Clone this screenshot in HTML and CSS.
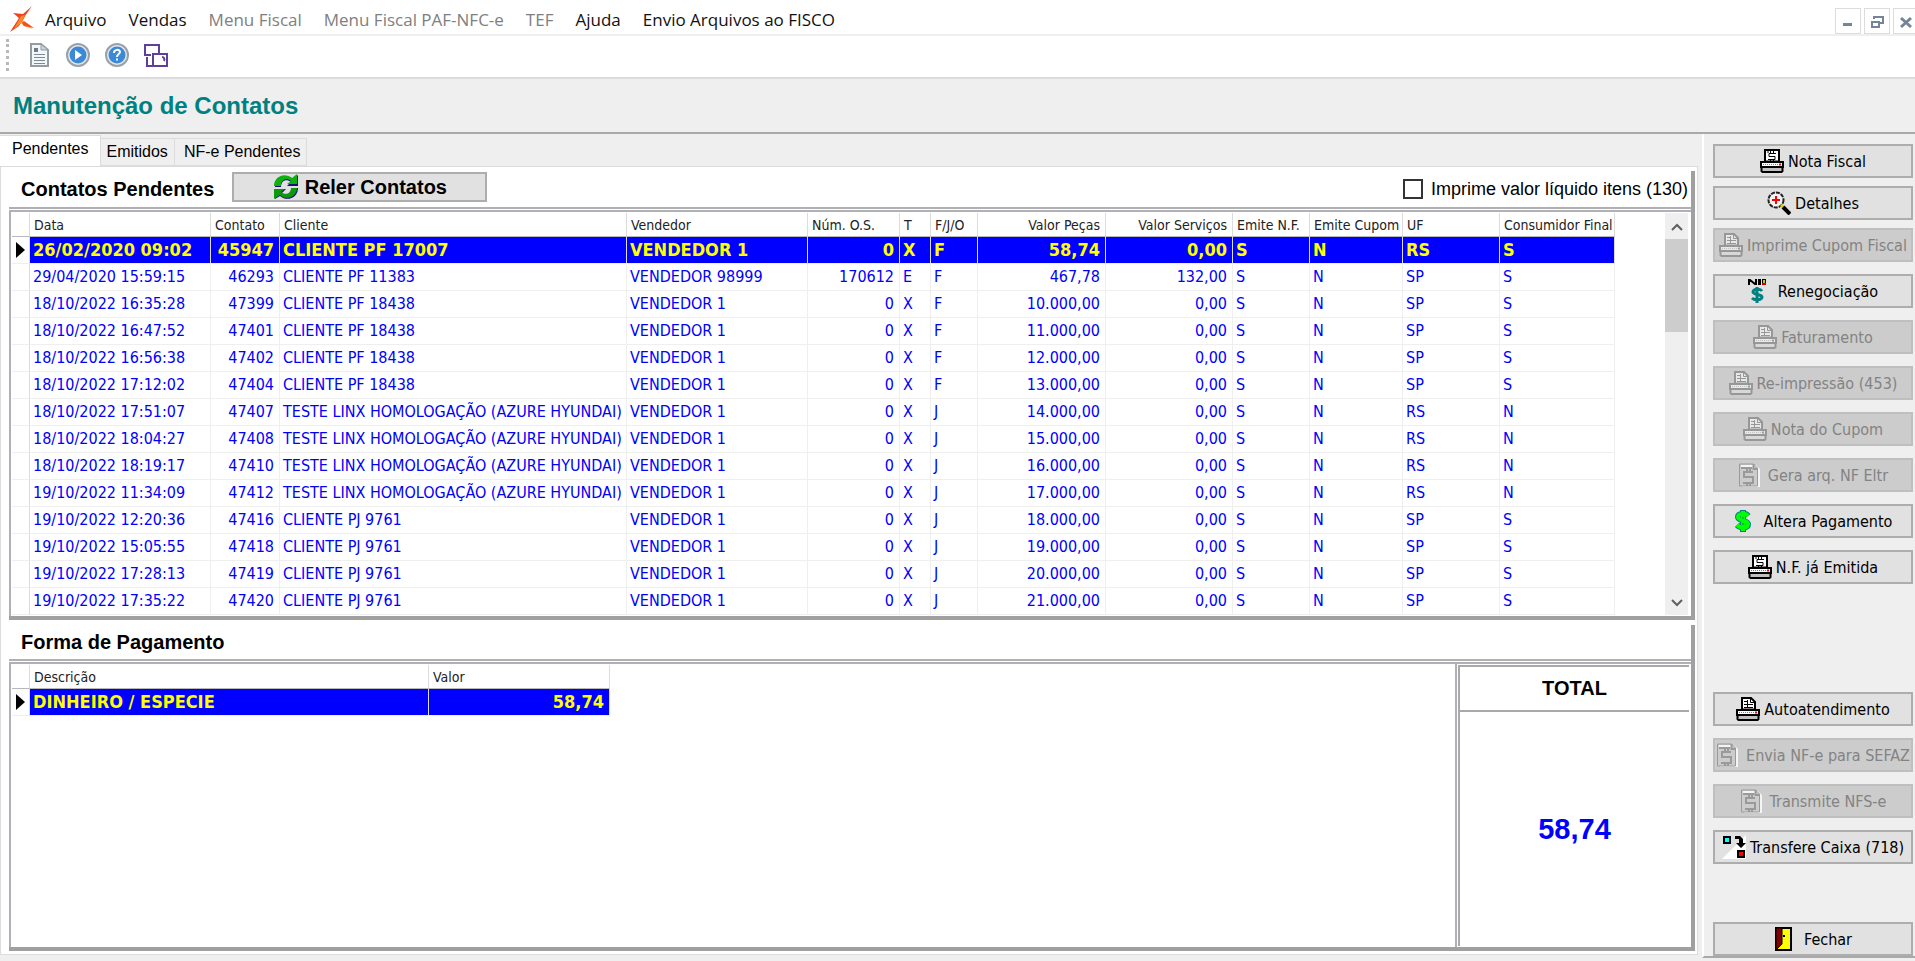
FILE: index.html
```
<!DOCTYPE html>
<html lang="pt-BR">
<head>
  <meta charset="UTF-8" />
  <meta name="viewport" content="width=device-width, initial-scale=1.0" />
  <title>Manutenção de Contatos</title>
  <link rel="stylesheet" href="styles.css">
</head>
<body>

  <!-- Shared icons -->
  <svg class="sprite" aria-hidden="true">
    <symbol id="printer" viewBox="0 0 24 24">
      <path class="paper" d="M6 12.500V1h9l4 4v7.500z"/>
      <path class="ink" d="M8 4.500h4M8 7.500h3M12 7.500h5M8 10.500h9M11.500 3v7M14.500 1v4.500h4"/>
      <path class="paper" d="M1 13h22v5H1z"/>
      <path class="ink dots" d="M3 15.500h16"/>
      <path class="shade" d="M1.500 18h21v4l-1 1h-19l-1-1z"/>
      <path class="led" d="M19 14.500h2v2h-2z"/>
    </symbol>
    <symbol id="printer-money" viewBox="0 0 24 24">
      <path class="paper" d="M5 12.500V1h14v11.500z"/>
      <path class="ink" d="M16 4.500H9v3h6v3H8M7 3h2M10.500 1v3M13.500 1v3M10.500 10v3M13.500 10v3"/>
      <path class="paper" d="M1 13h22v5H1z"/>
      <path class="ink dots" d="M3 15.500h16"/>
      <path class="shade" d="M1.500 18h21v4l-1 1h-19l-1-1z"/>
      <path class="led" d="M19 14.500h2v2h-2z"/>
    </symbol>
    <symbol id="doc-money" viewBox="0 0 24 24">
      <path class="lite" d="M3 2h15l4 4v18H4z"/>
      <path class="sheet" d="M1.500 1h14l4 4v18h-18z"/>
      <path class="lite" d="M3 2h12v2H3z"/>
      <path class="line" d="M3 5h11M15.500 1v5h4M15 9H6v5h9v6H5M9 5v4M12 5v4M9 20v3M12 20v3"/>
    </symbol>
  </svg>

  <header class="menubar">
    <svg class="logo" viewBox="0 0 26 26">
      <path fill="#ffa63a" d="M9 9l7 1-2 5 10 8-9-3-3-3-10 8 8-11z"/>
      <path fill="#f5401f" d="M23 0L14 8 4 7l6 5L1 26l9-6 6-10z"/>
      <path fill="#ff8a2c" d="M12 10l4-1-4 8-7 6z"/>
      <path fill="#f5501f" d="M15 15l10 7-10-2-2-3z"/>
    </svg>
    <nav class="menu">
      <a href="#">Arquivo</a>
      <a href="#">Vendas</a>
      <a href="#" class="off">Menu Fiscal</a>
      <a href="#" class="off">Menu Fiscal PAF-NFC-e</a>
      <a href="#" class="off">TEF</a>
      <a href="#">Ajuda</a>
      <a href="#">Envio Arquivos ao FISCO</a>
    </nav>
    <div class="win-buttons">
      <button aria-label="Minimizar"><svg viewBox="0 0 14 14"><path fill="#74849a" d="M2 8h9v3H2z"/></svg></button>
      <button aria-label="Restaurar"><svg viewBox="0 0 14 14"><path fill="none" stroke="#74849a" stroke-width="2" d="M4 4V2h9v6h-3M2 7h7v5H2z"/></svg></button>
      <button aria-label="Fechar janela"><svg viewBox="0 0 14 14"><path stroke="#74849a" stroke-width="3" d="M2 3l10 9M12 3L2 12"/></svg></button>
    </div>
  </header>

  <div class="toolbar">
    <span class="grip"></span>
    <button aria-label="Documento">
      <svg viewBox="0 0 24 24">
        <path fill="#f4f7fa" stroke="#939ba3" stroke-width="2" d="M4 1h10l7 6v16H4z"/>
        <path fill="#c9d3dd" stroke="#939ba3" d="M14 1v6h7z"/>
        <path fill="#6f7c89" d="M7 5h4v4H7z"/>
        <path stroke="#7d8a97" d="M7 11.500h11M7 14.500h11M7 17.500h11M7 20.500h11"/>
      </svg>
    </button>
    <button aria-label="Executar">
      <svg viewBox="0 0 24 24">
        <circle cx="12" cy="12" r="11" fill="#e4e8ec" stroke="#99a1a8" stroke-width="2"/>
        <circle cx="12" cy="12" r="8.500" fill="#3a8ad8"/>
        <path fill="#fff" d="M9 7l7 5-7 5z"/>
      </svg>
    </button>
    <button aria-label="Ajuda">
      <svg viewBox="0 0 24 24">
        <circle cx="12" cy="12" r="11" fill="#e4e8ec" stroke="#99a1a8" stroke-width="2"/>
        <circle cx="12" cy="12" r="8.500" fill="#3a8ad8"/>
        <path fill="none" stroke="#fff" stroke-width="2" d="M9 10c0-4 6-4 6-1 0 2-3 2-3 5M12 15.500v2"/>
      </svg>
    </button>
    <button aria-label="Janelas">
      <svg viewBox="0 0 24 24">
        <path fill="none" stroke="#5f3f9c" stroke-width="2" d="M7 12H1V2h14v8M9 11h14v12H9zM3 14v9h5M18 14c2 0 3 2 2 4"/>
      </svg>
    </button>
  </div>

  <div class="title-band">
    <h1>Manutenção de Contatos</h1>
  </div>

  <div class="workspace">
    <main class="content">
      <div class="tabs" role="tablist">
        <button class="tab active" role="tab">Pendentes</button>
        <button class="tab" role="tab">Emitidos</button>
        <button class="tab" role="tab">NF-e Pendentes</button>
      </div>

      <div class="page">
        <section class="panel pending">
          <div class="panel-head">
            <h2>Contatos Pendentes</h2>
            <button class="reload">
              <svg viewBox="0 0 26 26">
                <path fill="#12127a" d="M2 13C2 3 13-1 20 5l5-4v11H14l4-4c-5-4-10-1-10 5z"/>
                <path fill="#12127a" d="M25 14c0 10-11 14-18 8l-5 3V15h11l-4 4c5 4 10 1 10-5z"/>
                <path fill="#10b010" d="M1 12C1 2 12-2 19 4l5-4v10H14l4-3C13 3 8 6 8 12z"/>
                <path fill="#0c9a0c" d="M24 14c0 9-11 13-17 7l-6 4V15h11l-4 3c5 4 10 1 10-4z"/>
              </svg>
              Reler Contatos
            </button>
            <label class="net-value"><input type="checkbox"> Imprime valor líquido itens (130)</label>
          </div>
          <div class="grid-box">
            <div class="grid-view">
              <table class="grid">
                <colgroup>
                  <col class="c-mark"><col class="c-date"><col class="c-id"><col class="c-client"><col class="c-seller">
                  <col class="c-os"><col class="c-t"><col class="c-fj"><col class="c-parts"><col class="c-serv">
                  <col class="c-nf"><col class="c-cupom"><col class="c-uf"><col class="c-final">
                </colgroup>
                <thead>
                  <tr>
                    <th></th><th>Data</th><th>Contato</th><th>Cliente</th><th>Vendedor</th><th>Núm. O.S.</th><th>T</th><th>F/J/O</th>
                    <th class="num">Valor Peças</th><th class="num">Valor Serviços</th><th>Emite N.F.</th><th>Emite Cupom</th><th>UF</th><th>Consumidor Final</th>
                  </tr>
                </thead>
                <tbody id="rows"></tbody>
              </table>
            </div>
            <div class="scroll">
              <button aria-label="Subir"><svg viewBox="0 0 14 10"><path d="M2 8l5-5 5 5"/></svg></button>
              <div class="thumb"></div>
              <button aria-label="Descer"><svg viewBox="0 0 14 10"><path d="M2 2l5 5 5-5"/></svg></button>
            </div>
          </div>
        </section>

        <section class="panel payment">
          <div class="panel-head">
            <h2>Forma de Pagamento</h2>
          </div>
          <div class="grid-box">
            <div class="grid-view">
              <table class="grid">
                <colgroup><col class="c-mark"><col class="c-desc"><col class="c-value"></colgroup>
                <thead>
                  <tr><th></th><th>Descrição</th><th>Valor</th></tr>
                </thead>
                <tbody>
                  <tr class="selected"><td class="mark"></td><td>DINHEIRO / ESPECIE</td><td class="num">58,74</td></tr>
                </tbody>
              </table>
            </div>
            <div class="total">
              <div class="total-label">TOTAL</div>
              <div class="total-value">58,74</div>
            </div>
          </div>
        </section>
      </div>
    </main>

    <aside class="sidebar">
      <div class="group tight">
        <button><svg class="icon"><use href="#printer-money"/></svg>Nota Fiscal</button>
        <button>
          <svg class="icon" viewBox="0 0 24 24">
            <circle cx="9" cy="9" r="7.500" fill="#f4f4f4" stroke="#222" stroke-width="2" stroke-dasharray="4 1"/>
            <path stroke="#f00" stroke-width="2" d="M9 5v8M5 9h8"/>
            <path stroke="#e0d000" stroke-width="3" d="M14 14l3 3"/>
            <path stroke="#000" stroke-width="4" d="M16 16l7 7"/>
          </svg>Detalhes
        </button>
        <button disabled><svg class="icon"><use href="#printer"/></svg>Imprime Cupom Fiscal</button>
      </div>
      <div class="group">
        <button>
          <svg class="icon wide" viewBox="0 0 24 24">
            <path fill="none" stroke="#000" stroke-width="2" d="M1 6V1h1l5 4h1V0"/>
            <path fill="#000" d="M10 0h3v6h-3zM14 0h4v6h-4z"/>
            <path fill="#d8c000" d="M15 1h2v3h-2z"/><path fill="#c00" d="M14 4h4v2h-4z"/>
            <path fill="none" stroke="#008080" stroke-width="3" d="M14 12c-2-3-9-2-9 1s9 2 9 5-7 4-10 1M9 8v16"/>
          </svg>Renegociação
        </button>
        <button disabled><svg class="icon"><use href="#printer"/></svg>Faturamento</button>
        <button disabled><svg class="icon"><use href="#printer"/></svg>Re-impressão (453)</button>
        <button disabled><svg class="icon"><use href="#printer"/></svg>Nota do Cupom</button>
      </div>
      <div class="group">
        <button disabled><svg class="icon wide"><use href="#doc-money"/></svg>Gera arq. NF Eltr</button>
        <button>
          <svg class="icon wide" viewBox="0 0 24 24">
            <path fill="none" stroke="#008080" stroke-width="6" d="M14 7C12 4 4 4 4 8s10 3 10 7-7 5-11 1M9 1v22"/>
            <path fill="none" stroke="#0f0" stroke-width="4" d="M14 7C12 4 4 4 4 8s10 3 10 7-7 5-11 1M9 2v20"/>
            <path fill="none" stroke="#008080" d="M9 8v2M9 14v2"/>
          </svg>Altera Pagamento
        </button>
        <button><svg class="icon"><use href="#printer-money"/></svg>N.F. já Emitida</button>
      </div>
      <div class="group lower">
        <button><svg class="icon"><use href="#printer"/></svg>Autoatendimento</button>
        <button disabled><svg class="icon wide"><use href="#doc-money"/></svg>Envia NF-e para SEFAZ</button>
        <button disabled><svg class="icon wide"><use href="#doc-money"/></svg>Transmite NFS-e</button>
        <button>
          <svg class="icon" viewBox="0 0 24 24">
            <path fill="#fff" d="M24 0v24H0z"/>
            <path fill="#0ff" stroke="#000" stroke-width="2" d="M2 2h6v6H2z"/>
            <path fill="#f00" stroke="#000" stroke-width="2" d="M16 16h6v6h-6z"/>
            <path d="M13 1h5l3 3v4h3l-5 5-5-5h3V4h-4z"/>
          </svg>Transfere Caixa (718)
        </button>
      </div>
      <div class="group last">
        <button>
          <svg class="icon wide" viewBox="0 0 24 24">
            <path fill="#ff0" stroke="#000" stroke-width="2" d="M2 1h15v22H2z"/>
            <path fill="#800000" stroke="#000" d="M2 1h6v16l-6 6z"/>
            <path d="M9 8h2v2H9z"/>
          </svg>Fechar
        </button>
      </div>
    </aside>
  </div>

  <script>
    // data, contato, cliente, vendedor, O.S., T, F/J/O, peças, serviços, N.F., cupom, UF, consumidor final
    const hyundai = 'TESTE LINX HOMOLOGAÇÃO (AZURE HYUNDAI)';
    const contatos = [
      ['26/02/2020 09:02', '45947', 'CLIENTE PF 17007', 'VENDEDOR 1', '0', 'X', 'F', '58,74', '0,00', 'S', 'N', 'RS', 'S'],
      ['29/04/2020 15:59:15', '46293', 'CLIENTE PF 11383', 'VENDEDOR 98999', '170612', 'E', 'F', '467,78', '132,00', 'S', 'N', 'SP', 'S'],
      ['18/10/2022 16:35:28', '47399', 'CLIENTE PF 18438', 'VENDEDOR 1', '0', 'X', 'F', '10.000,00', '0,00', 'S', 'N', 'SP', 'S'],
      ['18/10/2022 16:47:52', '47401', 'CLIENTE PF 18438', 'VENDEDOR 1', '0', 'X', 'F', '11.000,00', '0,00', 'S', 'N', 'SP', 'S'],
      ['18/10/2022 16:56:38', '47402', 'CLIENTE PF 18438', 'VENDEDOR 1', '0', 'X', 'F', '12.000,00', '0,00', 'S', 'N', 'SP', 'S'],
      ['18/10/2022 17:12:02', '47404', 'CLIENTE PF 18438', 'VENDEDOR 1', '0', 'X', 'F', '13.000,00', '0,00', 'S', 'N', 'SP', 'S'],
      ['18/10/2022 17:51:07', '47407', hyundai, 'VENDEDOR 1', '0', 'X', 'J', '14.000,00', '0,00', 'S', 'N', 'RS', 'N'],
      ['18/10/2022 18:04:27', '47408', hyundai, 'VENDEDOR 1', '0', 'X', 'J', '15.000,00', '0,00', 'S', 'N', 'RS', 'N'],
      ['18/10/2022 18:19:17', '47410', hyundai, 'VENDEDOR 1', '0', 'X', 'J', '16.000,00', '0,00', 'S', 'N', 'RS', 'N'],
      ['19/10/2022 11:34:09', '47412', hyundai, 'VENDEDOR 1', '0', 'X', 'J', '17.000,00', '0,00', 'S', 'N', 'RS', 'N'],
      ['19/10/2022 12:20:36', '47416', 'CLIENTE PJ 9761', 'VENDEDOR 1', '0', 'X', 'J', '18.000,00', '0,00', 'S', 'N', 'SP', 'S'],
      ['19/10/2022 15:05:55', '47418', 'CLIENTE PJ 9761', 'VENDEDOR 1', '0', 'X', 'J', '19.000,00', '0,00', 'S', 'N', 'SP', 'S'],
      ['19/10/2022 17:28:13', '47419', 'CLIENTE PJ 9761', 'VENDEDOR 1', '0', 'X', 'J', '20.000,00', '0,00', 'S', 'N', 'SP', 'S'],
      ['19/10/2022 17:35:22', '47420', 'CLIENTE PJ 9761', 'VENDEDOR 1', '0', 'X', 'J', '21.000,00', '0,00', 'S', 'N', 'SP', 'S']
    ];
    const numeric = [1, 4, 7, 8];
    const body = document.getElementById('rows');

    contatos.forEach((contato, i) => {
      const tr = body.insertRow();
      if (i === 0) tr.className = 'selected';
      tr.insertCell().className = 'mark';
      contato.forEach((value, col) => {
        const td = tr.insertCell();
        td.textContent = value;
        if (numeric.includes(col)) td.className = 'num';
      });
    });
  </script>
</body>
</html>
```

FILE: styles.css
```
* { box-sizing: border-box; margin: 0; padding: 0; }

html, body { height: 100%; }

body {
  display: flex;
  flex-direction: column;
  background: #efefef;
  color: #000;
  font-family: "DejaVu Sans Condensed", "DejaVu Sans", sans-serif;
  font-size: 16px;
  overflow: hidden;
}

button { font: inherit; color: inherit; }

.sprite { position: absolute; width: 0; height: 0; }

/* Menu bar */
.menubar {
  display: flex;
  align-items: center;
  height: 36px;
  padding-left: 9px;
  background: #fff;
  border-bottom: 2px solid #efefef;
}

.logo { width: 26px; height: 26px; margin-top: 4px; }

.menu {
  display: flex;
  flex: 1;
  gap: 22px;
  margin-left: 10px;
  padding-top: 6px;
  font: 17px/24px "Open Sans", sans-serif;
  white-space: nowrap;
}

.menu a { color: #111; text-decoration: none; }
.menu a.off { color: #808080; }

.win-buttons { display: flex; gap: 3px; align-self: flex-end; margin-right: -4px; }

.win-buttons button {
  width: 26px;
  height: 26px;
  background: #fff;
  border: 1px solid #dcdcdc;
}

.win-buttons svg { width: 14px; height: 14px; vertical-align: middle; }

/* Toolbar */
.toolbar {
  display: flex;
  align-items: center;
  gap: 15px;
  height: 43px;
  padding: 0 6px 4px;
  background: #fff;
  border-bottom: 2px solid #dcdcdc;
}

.toolbar button { width: 24px; height: 24px; background: none; border: none; }
.toolbar svg { display: block; width: 24px; height: 24px; }

.grip { height: 32px; margin-right: 3px; border-left: 3px dotted #b8b8b8; }

/* Title */
.title-band {
  display: flex;
  align-items: center;
  height: 55px;
  padding-left: 13px;
  border-bottom: 2px solid #a9a9a9;
}

h1 {
  color: #008080;
  font: bold 24px/28px "Liberation Sans", Arial, sans-serif;
}

.workspace { display: flex; flex: 1; min-height: 0; }

.content { display: flex; flex: 1; flex-direction: column; min-width: 0; padding: 1px 4px 6px 0; }

/* Tabs */
.tabs {
  display: flex;
  align-items: flex-end;
  height: 31px;
  font: 16px/18px "Liberation Sans", Arial, sans-serif;
}

.tab {
  height: 28px;
  padding: 0 6px;
  background: #efefef;
  border: 1px solid #dcdcdc;
  border-left: none;
}

.tab.active {
  height: 31px;
  padding: 0 11px 4px 12px;
  background: #fff;
  border-bottom: none;
}

.tab:last-child { padding: 0 6px 0 9px; }

.page {
  display: flex;
  flex: 1;
  flex-direction: column;
  gap: 5px;
  min-height: 0;
  padding: 4px 2px 3px 8px;
  background: #fff;
  border: 1px solid #dcdcdc;
}

/* Panels */
.panel {
  display: flex;
  flex-direction: column;
  border-right: 4px solid #a0a0a0;
  border-bottom: 4px solid #a0a0a0;
}

.pending { height: 449px; }
.payment { flex: 1; min-height: 0; }

.panel-head {
  display: flex;
  align-items: center;
  height: 38px;
  padding: 0 3px 0 12px;
  border-bottom: 2px solid #b0b0b0;
}

.payment .panel-head { height: 36px; }

h2 { font: bold 20px/24px "Liberation Sans", Arial, sans-serif; }

.reload {
  display: flex;
  align-items: center;
  justify-content: center;
  gap: 6px;
  width: 255px;
  height: 30px;
  margin: 0 auto 4px 18px;
  background: #e1e1e1;
  border: 2px solid #adadad;
  font: bold 20px/24px "Liberation Sans", Arial, sans-serif;
}

.reload svg { width: 26px; height: 26px; }

.net-value {
  display: flex;
  align-items: center;
  gap: 8px;
  font: 18px/22px "Liberation Sans", Arial, sans-serif;
}

.net-value input {
  appearance: none;
  width: 20px;
  height: 20px;
  background: #fff;
  border: 2px solid #333;
}

.grid-box {
  display: flex;
  flex: 1;
  min-height: 0;
  margin-top: 1px;
  border: 2px solid #b0b0b8;
  border-right: none;
  border-bottom: none;
}

.grid-view { flex: 1; overflow: hidden; padding: 1px; }

/* Tables */
.grid { table-layout: fixed; width: 0; border-collapse: separate; border-spacing: 0; }

.grid th {
  height: 24px;
  padding: 0 2px 0 4px;
  border-right: 1px solid #dcdcdc;
  border-bottom: 1px solid #b8b8b8;
  color: #222;
  font-size: 14px;
  font-weight: normal;
  text-align: left;
  white-space: nowrap;
}

.grid td {
  height: 27px;
  padding: 0 3px;
  overflow: hidden;
  border-right: 1px solid #efefef;
  border-bottom: 1px solid #efefef;
  color: #00f;
  line-height: 20px;
  white-space: nowrap;
}

.grid .num { padding-right: 5px; text-align: right; }

.grid .mark, .grid th:first-child { padding: 0 4px; border-right-color: #dcdcdc; }

.selected td {
  background: #00f;
  border-right-color: #dcdcdc;
  color: #ff0;
  font-size: 18px;
  font-weight: bold;
}

.selected .mark { background: #fff; }

.selected .mark::before {
  content: "";
  display: block;
  width: 0;
  border: 8px solid transparent;
  border-left: 9px solid #000;
  border-right: none;
}

.c-mark { width: 18px; }
.c-date { width: 181px; }
.c-id { width: 69px; }
.c-client { width: 347px; }
.c-seller { width: 181px; }
.c-os { width: 92px; }
.c-t { width: 31px; }
.c-fj { width: 47px; }
.c-parts { width: 128px; }
.c-serv { width: 127px; }
.c-nf { width: 77px; }
.c-cupom { width: 93px; }
.c-uf { width: 97px; }
.c-final { width: 115px; }
.c-desc { width: 399px; }
.c-value { width: 181px; }

/* Scroll bar */
.scroll {
  display: flex;
  flex-direction: column;
  width: 23px;
  margin: 1px 3px 1px 0;
  background: #efefef;
}

.scroll button { height: 26px; background: none; border: none; }
.scroll button:last-child { margin-top: auto; }
.scroll svg { width: 14px; height: 10px; vertical-align: middle; }
.scroll path { fill: none; stroke: #606060; stroke-width: 2; }
.thumb { height: 93px; background: #cdcdcd; }

/* Total */
.total {
  display: flex;
  flex-direction: column;
  width: 236px;
  padding: 1px 2px 1px 1px;
  border-left: 2px solid #b0b0b8;
  font-family: "Liberation Sans", Arial, sans-serif;
  font-weight: bold;
}

.total-label {
  padding: 10px 0;
  border-top: 2px solid #a9a9a9;
  border-left: 2px solid #a9a9a9;
  font-size: 20px;
  line-height: 23px;
  text-align: center;
}

.total-value {
  display: flex;
  flex: 1;
  align-items: center;
  justify-content: center;
  border-top: 2px solid #a9a9a9;
  border-left: 2px solid #a9a9a9;
  color: #00f;
  font-size: 29px;
}

/* Side buttons */
.sidebar {
  display: flex;
  flex-direction: column;
  gap: 12px;
  width: 213px;
  margin-bottom: 3px;
  padding: 10px 2px 0 9px;
  border-left: 2px solid #fff;
  border-bottom: 2px solid #a9a9a9;
}

.group { display: flex; flex-direction: column; gap: 12px; }
.tight { gap: 8px; }
.lower { margin-top: 96px; }
.last { margin-top: auto; }

.group button {
  display: flex;
  align-items: center;
  justify-content: center;
  gap: 4px;
  height: 34px;
  background: #e1e1e1;
  border: 2px solid #adadad;
  white-space: nowrap;
}

.group button:disabled {
  background: #ccc;
  border-color: #bfbfbf;
  color: #838383;
}

.icon { flex: none; width: 24px; height: 24px; }
.icon.wide { margin-right: 2px; }

/* Icon parts take their colour from the button they sit in */
.icon { --line: #000; --paper: #fff; --shade: #c0c0c0; --led: #f00; }
button:disabled .icon { --line: #979797; --paper: #e8e8e8; --shade: #d8d8d8; --led: #979797; }

.paper { fill: var(--paper); stroke: var(--line); stroke-width: 2; }
.ink { fill: none; stroke: var(--line); }
.dots { stroke-dasharray: 1 1; opacity: 0.5; }
.shade { fill: var(--shade); stroke: var(--line); stroke-width: 2; }
.led { fill: var(--led); }
.lite { fill: #f4f4f4; }
.sheet { fill: #ccc; stroke: #9a9a9a; }
.line { fill: none; stroke: #9a9a9a; stroke-width: 2; }
```
